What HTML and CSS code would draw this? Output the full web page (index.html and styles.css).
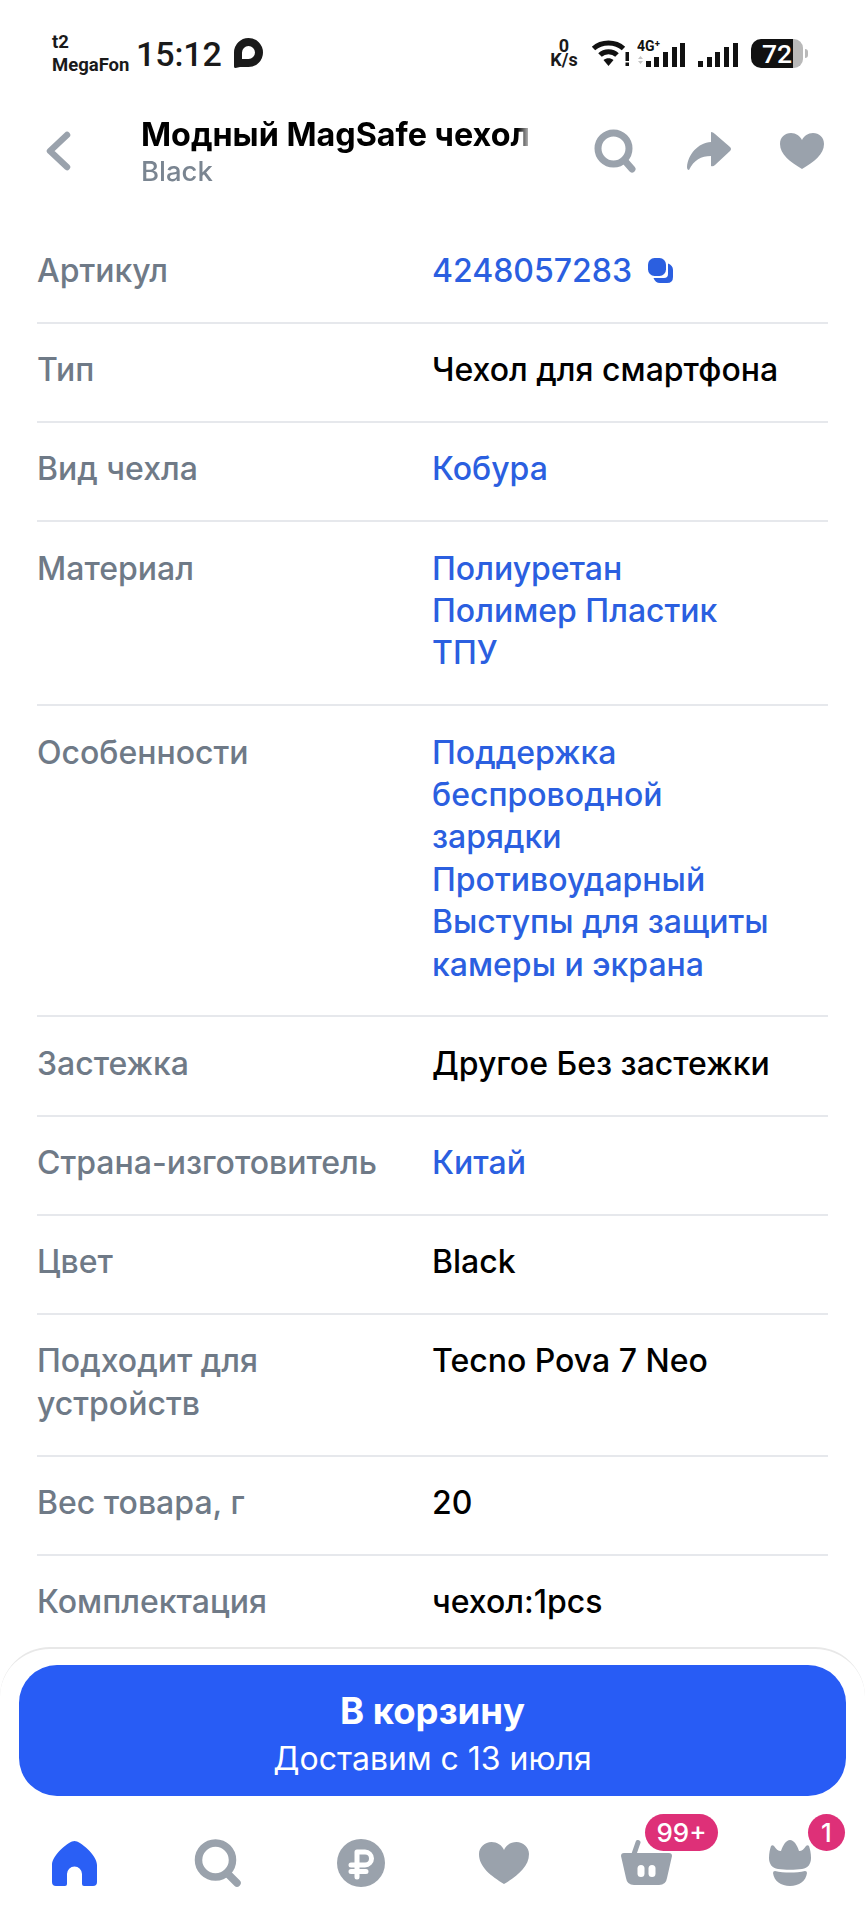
FILE: index.html
```html
<!DOCTYPE html>
<html lang="ru">
<head>
    <meta charset="UTF-8">
    <meta name="viewport" content="width=device-width, initial-scale=1.0">
    <title>Характеристики</title>
    <link rel="stylesheet" href="styles.css">
</head>
<body>
<div class="page">

    <div class="status-bar">
        <div class="carrier">
            <span>t2</span>
            <span>MegaFon</span>
        </div>
        <div class="clock">15:12</div>
        <svg class="bubble" width="30" height="30" viewBox="0 0 30 30">
            <path d="M15.500 0a14.500 14.500 0 0 1 0 29H7L2.500 30Q1 30 1 28.500V14.500A14.500 14.500 0 0 1 15.500 0Z" fill="#1a1a1a"/>
            <path d="M15.500 8a6.500 6.500 0 0 1 0 13H9V14.500A6.500 6.500 0 0 1 15.500 8Z" fill="#fff"/>
        </svg>
        <div class="status-right">
            <div class="speed"><span>0</span><span>K/s</span></div>
            <svg class="wifi" width="40" height="28" viewBox="0 0 40 28">
                <path d="M2.500 9.500C10.500 2 24.500 2 32.500 9.500" fill="none" stroke="#111" stroke-width="5"/>
                <path d="M9 16C13.500 11.500 21.500 11.500 26 16" fill="none" stroke="#111" stroke-width="5"/>
                <path d="M17.500 27l-5-6c3-2.400 7-2.400 10 0Z" fill="#111"/>
                <rect x="34.500" y="13" width="3.500" height="9" fill="#111"/>
                <rect x="34.500" y="23.500" width="3.500" height="3.500" fill="#111"/>
            </svg>
            <svg class="signal" width="49" height="28" viewBox="0 0 49 28">
                <text x="0" y="12" class="signal-label">4G⁺</text>
                <path d="M1 20l2.500-3 2.500 3ZM1 22l2.500 3 2.500-3Z" fill="#c4c4c4"/>
                <rect x="9" y="22" width="5" height="6" fill="#111"/>
                <rect x="17" y="18" width="5" height="10" fill="#111"/>
                <rect x="26" y="13" width="5" height="15" fill="#111"/>
                <rect x="35" y="8" width="5" height="20" fill="#111"/>
                <rect x="43" y="4" width="5" height="24" fill="#111"/>
            </svg>
            <svg class="signal-two" width="40" height="28" viewBox="0 0 40 28">
                <rect x="0" y="22" width="5" height="6" fill="#111"/>
                <rect x="9" y="18" width="5" height="10" fill="#111"/>
                <rect x="17" y="13" width="5" height="15" fill="#111"/>
                <rect x="26" y="8" width="5" height="20" fill="#111"/>
                <rect x="35" y="4" width="5" height="24" fill="#111"/>
            </svg>
            <div class="battery">
                <div class="battery-body">72</div>
                <div class="battery-rest"></div>
                <div class="battery-nub"></div>
            </div>
        </div>
    </div>

    <div class="top-bar">
        <svg class="back" width="26" height="40" viewBox="0 0 26 40">
            <path d="M22 4L5 20L22 36" fill="none" stroke="#9aa2ac" stroke-width="6.500" stroke-linecap="round" stroke-linejoin="round"/>
        </svg>
        <div class="top-title">
            <div class="product-name">Модный MagSafe чехол для телефона</div>
            <div class="product-color">Black</div>
        </div>
        <div class="top-actions">
            <svg width="43" height="44" viewBox="0 0 43 44">
                <circle cx="19.500" cy="19.500" r="15.500" fill="none" stroke="#9aa2ac" stroke-width="7"/>
                <path d="M31 32L38 40" stroke="#9aa2ac" stroke-width="7" stroke-linecap="round"/>
            </svg>
            <svg width="44" height="38" viewBox="0 0 44 38">
                <path d="M24 0Q26 0 28 2L43 15Q45 17 43 19L28 33Q26 35 24 34V24C14 24 7 28 2 38Q0 38 0 35C1 22 11 11 24 10Z" fill="#9aa2ac"/>
            </svg>
            <svg width="44" height="36" viewBox="0 0 44 36">
                <path d="M22 36C10 29 0 21 0 11C0 4 5 0 11 0C16 0 20 3 22 7C24 3 28 0 33 0C39 0 44 4 44 11C44 21 34 29 22 36Z" fill="#9aa2ac"/>
            </svg>
        </div>
    </div>

    <div class="specs">
        <div class="spec-row">
            <div class="spec-label">Артикул</div>
            <div class="spec-value spec-link">
                <span class="article">4248057283
                    <svg class="copy-icon" width="26" height="26" viewBox="0 0 26 26">
                        <path d="M20 5.500C23 6.500 25 9 25 12V19Q25 25 19 25H12C9 25 6.500 23 5.500 20H16Q20 20 20 16Z" fill="#2b5fe0"/>
                        <rect x="0" y="0" width="18" height="18" rx="6.500" fill="#2b5fe0"/>
                    </svg>
                </span>
            </div>
        </div>
        <div class="spec-row">
            <div class="spec-label">Тип</div>
            <div class="spec-value">Чехол для смартфона</div>
        </div>
        <div class="spec-row">
            <div class="spec-label">Вид чехла</div>
            <div class="spec-value spec-link">Кобура</div>
        </div>
        <div class="spec-row">
            <div class="spec-label">Материал</div>
            <div class="spec-value spec-link">
                <div>Полиуретан</div>
                <div>Полимер Пластик</div>
                <div>ТПУ</div>
            </div>
        </div>
        <div class="spec-row">
            <div class="spec-label">Особенности</div>
            <div class="spec-value spec-link">
                <div>Поддержка беспроводной зарядки</div>
                <div>Противоударный</div>
                <div>Выступы для защиты камеры и экрана</div>
            </div>
        </div>
        <div class="spec-row">
            <div class="spec-label">Застежка</div>
            <div class="spec-value">Другое Без застежки</div>
        </div>
        <div class="spec-row">
            <div class="spec-label">Страна-изготовитель</div>
            <div class="spec-value spec-link">Китай</div>
        </div>
        <div class="spec-row">
            <div class="spec-label">Цвет</div>
            <div class="spec-value">Black</div>
        </div>
        <div class="spec-row">
            <div class="spec-label">Подходит для устройств</div>
            <div class="spec-value">Tecno Pova 7 Neo</div>
        </div>
        <div class="spec-row">
            <div class="spec-label">Вес товара, г</div>
            <div class="spec-value">20</div>
        </div>
        <div class="spec-row">
            <div class="spec-label">Комплектация</div>
            <div class="spec-value">чехол:1pcs</div>
        </div>
    </div>

    <div class="bottom-panel">
        <button class="cart-button">
            <span class="cart-title">В корзину</span>
            <span class="cart-sub">Доставим с 13 июля</span>
        </button>
        <div class="tabs">
            <div class="tab">
                <svg width="45" height="45" viewBox="0 0 45 45">
                    <path d="M22.500 0C17 0 0 14 0 24V41a4 4 0 0 0 4 4H13a2 2 0 0 0 2-2V33a7.500 7.500 0 0 1 15 0V43a2 2 0 0 0 2 2H41a4 4 0 0 0 4-4V24C45 14 28 0 22.500 0Z" fill="#2a5ff5"/>
                </svg>
            </div>
            <div class="tab">
                <svg width="48" height="48" viewBox="0 0 48 48">
                    <circle cx="21.500" cy="21" r="17" fill="none" stroke="#9aa2ac" stroke-width="7.500"/>
                    <path d="M34 35L43 44" stroke="#9aa2ac" stroke-width="7.500" stroke-linecap="round"/>
                </svg>
            </div>
            <div class="tab">
                <svg width="48" height="48" viewBox="0 0 48 48">
                    <circle cx="24" cy="24" r="24" fill="#9aa2ac"/>
                    <path d="M20 38V13H28a6.500 6.500 0 0 1 0 13H14M14 32.500H29" fill="none" stroke="#fff" stroke-width="5" stroke-linecap="round" stroke-linejoin="round"/>
                </svg>
            </div>
            <div class="tab">
                <svg width="50" height="42" viewBox="0 0 50 42">
                    <path d="M25 42C12 34 0 25 0 12C0 5 6 0 12.500 0C18 0 23 3 25 8C27 3 32 0 37.500 0C44 0 50 5 50 12C50 25 38 34 25 42Z" fill="#9aa2ac"/>
                </svg>
            </div>
            <div class="tab">
                <svg width="51" height="46" viewBox="0 0 51 46">
                    <path d="M17 2.500L13 14" stroke="#9aa2ac" stroke-width="5" stroke-linecap="round"/>
                    <path d="M3 13H48Q51 13 51 16L46 38Q45 45 38 45H13Q6 45 5 38L0 16Q0 13 3 13Z" fill="#9aa2ac"/>
                    <rect x="16.500" y="25" width="7" height="12" rx="3.500" fill="#fff"/>
                    <rect x="27.500" y="25" width="7" height="12" rx="3.500" fill="#fff"/>
                </svg>
                <span class="badge badge-cart">99+</span>
            </div>
            <div class="tab">
                <svg width="42" height="46" viewBox="0 0 42 46">
                    <path d="M21 0C25 0 28 5 30 11C33 11 35 9 37 6C38 5 39 5 40 6C41 9 42 13 42 18C42 24 39 28 33 29C26 30 16 30 9 29C3 28 0 24 0 18C0 13 1 9 2 6C3 5 4 5 5 6C7 9 9 11 12 11C14 5 17 0 21 0Z" fill="#9aa2ac"/>
                    <path d="M6 31C15 33 27 33 36 31Q38 31 38 33C37 41 30 46 21 46C12 46 5 41 4 33Q4 31 6 31Z" fill="#9aa2ac"/>
                </svg>
                <span class="badge badge-crown">1</span>
            </div>
        </div>
    </div>

</div>
</body>
</html>
```

FILE: styles.css
```css
* {
    box-sizing: border-box;
}
body {
    margin: 0;
    background-color: #fff;
    font-family: 'Inter', 'Noto Sans', sans-serif;
    color: #000;
}
.page {
    display: flex;
    flex-direction: column;
    height: 1920px;
    overflow: hidden;
    background-color: #fff;
}

/* status bar */
.status-bar {
    display: flex;
    align-items: center;
    height: 106px;
    padding: 0 57px 0 52px;
    color: #1a1a1a;
    font-family: 'Roboto', sans-serif;
}
.carrier {
    display: flex;
    flex-direction: column;
    gap: 5px;
    width: 84px;
    font-size: 18.500px;
    line-height: 18px;
    font-weight: 700;
    white-space: nowrap;
}
.clock {
    font-size: 34px;
    font-weight: 500;
    margin-top: 1px;
    letter-spacing: -0.1px;
}
.bubble {
    margin-left: 11px;
}
.status-right {
    display: flex;
    align-items: center;
    margin-left: auto;
}
.speed {
    display: flex;
    flex-direction: column;
    align-items: center;
    width: 30px;
    font-size: 18px;
    line-height: 14.500px;
    font-weight: 700;
}
.wifi {
    margin-left: 12px;
}
.signal {
    margin-left: 6px;
}
.signal-label {
    font-family: 'Roboto', sans-serif;
    font-size: 14px;
    font-weight: 700;
    fill: #111;
}
.signal-two {
    margin-left: 12px;
}
.battery {
    display: flex;
    align-items: center;
    margin-left: 13px;
}
.battery-body {
    width: 42px;
    height: 29px;
    background-color: #111;
    border-radius: 10px 0 0 10px;
    color: #fff;
    font-size: 26.500px;
    line-height: 29px;
    font-weight: 500;
    text-align: right;
    padding-right: 1px;
}
.battery-rest {
    width: 10px;
    height: 29px;
    background-color: #b9b9b9;
    border-radius: 0 9px 9px 0;
}
.battery-nub {
    width: 3px;
    height: 9px;
    margin-left: 2px;
    background-color: #b9b9b9;
    border-radius: 0 3px 3px 0;
}

/* top bar */
.top-bar {
    display: flex;
    align-items: center;
    height: 90px;
    margin-bottom: 28.500px;
    padding: 0 41px 0 45px;
}
.top-title {
    width: 392px;
    margin-left: 70px;
    overflow: hidden;
    white-space: nowrap;
    -webkit-mask-image: linear-gradient(to right, #000 96%, transparent 100%);
    mask-image: linear-gradient(to right, #000 96%, transparent 100%);
}
.product-name {
    font-size: 32.300px;
    line-height: 40px;
    font-weight: 700;
}
.product-color {
    font-size: 27.500px;
    line-height: 32px;
    font-weight: 500;
    color: #7a8591;
}
.top-actions {
    display: flex;
    align-items: center;
    gap: 49.500px;
    margin-left: auto;
}

/* characteristics */
.specs {
    flex: 1;
    min-height: 0;
    overflow: hidden;
    padding: 0 37px;
}
.spec-row {
    display: grid;
    grid-template-columns: 395px 1fr;
    padding: 25.500px 0 29.300px;
    border-bottom: 2px solid #e6e8ec;
    font-size: 32px;
    font-weight: 450;
    line-height: 42.400px;
}
.spec-row:last-child {
    border-bottom: none;
}
.spec-label {
    color: #6f7a87;
    padding-right: 40px;
}
.spec-value {
    padding-right: 32px;
}
.spec-link {
    color: #2b5fe0;
}
.article {
    display: inline-flex;
    align-items: center;
    gap: 16px;
    white-space: nowrap;
}

/* bottom panel */
.bottom-panel {
    flex-shrink: 0;
    height: 273px;
    border-top: 2px solid #e8e8e8;
    border-radius: 50px 50px 0 0;
    padding: 16px 19px 0 19px;
}
.cart-button {
    display: flex;
    flex-direction: column;
    align-items: center;
    justify-content: center;
    width: 100%;
    height: 131px;
    padding: 8px 0 0;
    border: none;
    border-radius: 38px;
    background-color: #285cf5;
    color: #fff;
    font-family: 'Inter', sans-serif;
}
.cart-title {
    font-size: 36.500px;
    line-height: 48px;
    font-weight: 700;
}
.cart-sub {
    font-size: 32px;
    line-height: 48px;
    font-weight: 400;
}
.tabs {
    display: grid;
    grid-template-columns: repeat(6, 143px);
    margin: 43px -16px 0 -16px;
}
.tab {
    position: relative;
    display: flex;
    align-items: center;
    justify-content: center;
    height: 48px;
}
.badge {
    position: absolute;
    top: -25px;
    height: 37px;
    border-radius: 19px;
    background-color: #de3078;
    color: #fff;
    font-size: 26px;
    line-height: 37px;
    font-weight: 500;
    text-align: center;
}
.badge-cart {
    left: 70px;
    width: 73px;
}
.badge-crown {
    left: 90px;
    width: 37px;
}
```
